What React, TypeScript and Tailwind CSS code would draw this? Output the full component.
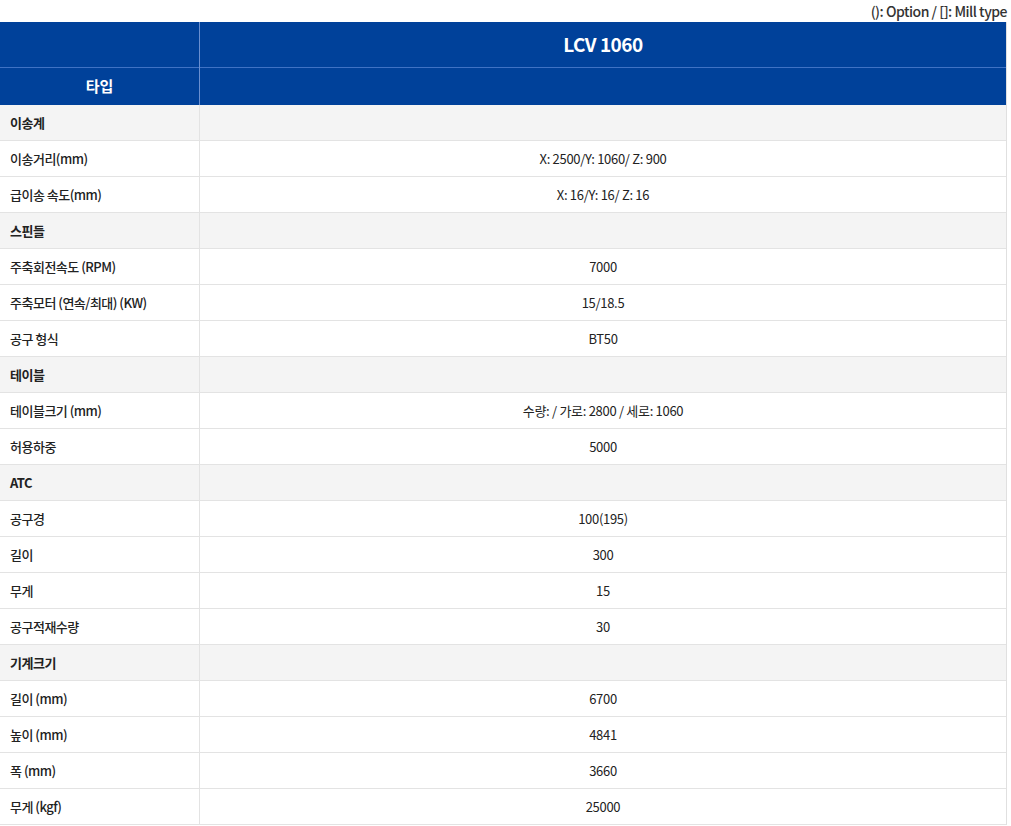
const rows: [string, string, boolean][] = [
  ["이송계", "", true],
  ["이송거리(mm)", "X: 2500/Y: 1060/ Z: 900", false],
  ["급이송 속도(mm)", "X: 16/Y: 16/ Z: 16", false],
  ["스핀들", "", true],
  ["주축회전속도 (RPM)", "7000", false],
  ["주축모터 (연속/최대) (KW)", "15/18.5", false],
  ["공구 형식", "BT50", false],
  ["테이블", "", true],
  ["테이블크기 (mm)", "수량: / 가로: 2800 / 세로: 1060", false],
  ["허용하중", "5000", false],
  ["ATC", "", true],
  ["공구경", "100(195)", false],
  ["길이", "300", false],
  ["무게", "15", false],
  ["공구적재수량", "30", false],
  ["기계크기", "", true],
  ["길이 (mm)", "6700", false],
  ["높이 (mm)", "4841", false],
  ["폭 (mm)", "3660", false],
  ["무게 (kgf)", "25000", false],
];

export default function App() {
  return (
    <div className="w-[1011px] bg-white text-[#222]" style={{ fontFamily: '"Noto Sans CJK KR", "Noto Sans", sans-serif' }}>
      <div className="h-[22px] pr-[4px] flex items-center justify-end text-[14px] font-medium tracking-[-0.5px] text-[#333]">
        (): Option / []: Mill type
      </div>
      <div className="w-[1007px] border-r border-[#e0e0e0]">
        <div className="flex bg-[#00419a] text-white font-bold">
          <div className="w-[200px] border-r border-[#6a8fd0] flex flex-col">
            <div className="h-[46px] border-b border-[#3f72c4]" />
            <div className="h-[37px] flex items-center justify-center text-[15px]">타입</div>
          </div>
          <div className="flex-1 flex flex-col">
            <div className="h-[46px] border-b border-[#3f72c4] flex items-center justify-center text-[19px] tracking-[-0.5px]">LCV 1060</div>
            <div className="h-[37px]" />
          </div>
        </div>
        {rows.map(([k, v, sec], i) => (
          <div key={i} className={`flex h-[36px] border-b border-[#e3e3e3] text-[13px] ${sec ? "bg-[#f4f4f4]" : "bg-white"}`}>
            <div className={`w-[200px] border-r border-[#e3e3e3] flex items-center pl-[10px] tracking-[-0.5px] ${sec ? "font-bold" : "font-medium"}`}>{k}</div>
            <div className="flex-1 flex items-center justify-center tracking-[-0.3px]">{v}</div>
          </div>
        ))}
      </div>
    </div>
  );
}
